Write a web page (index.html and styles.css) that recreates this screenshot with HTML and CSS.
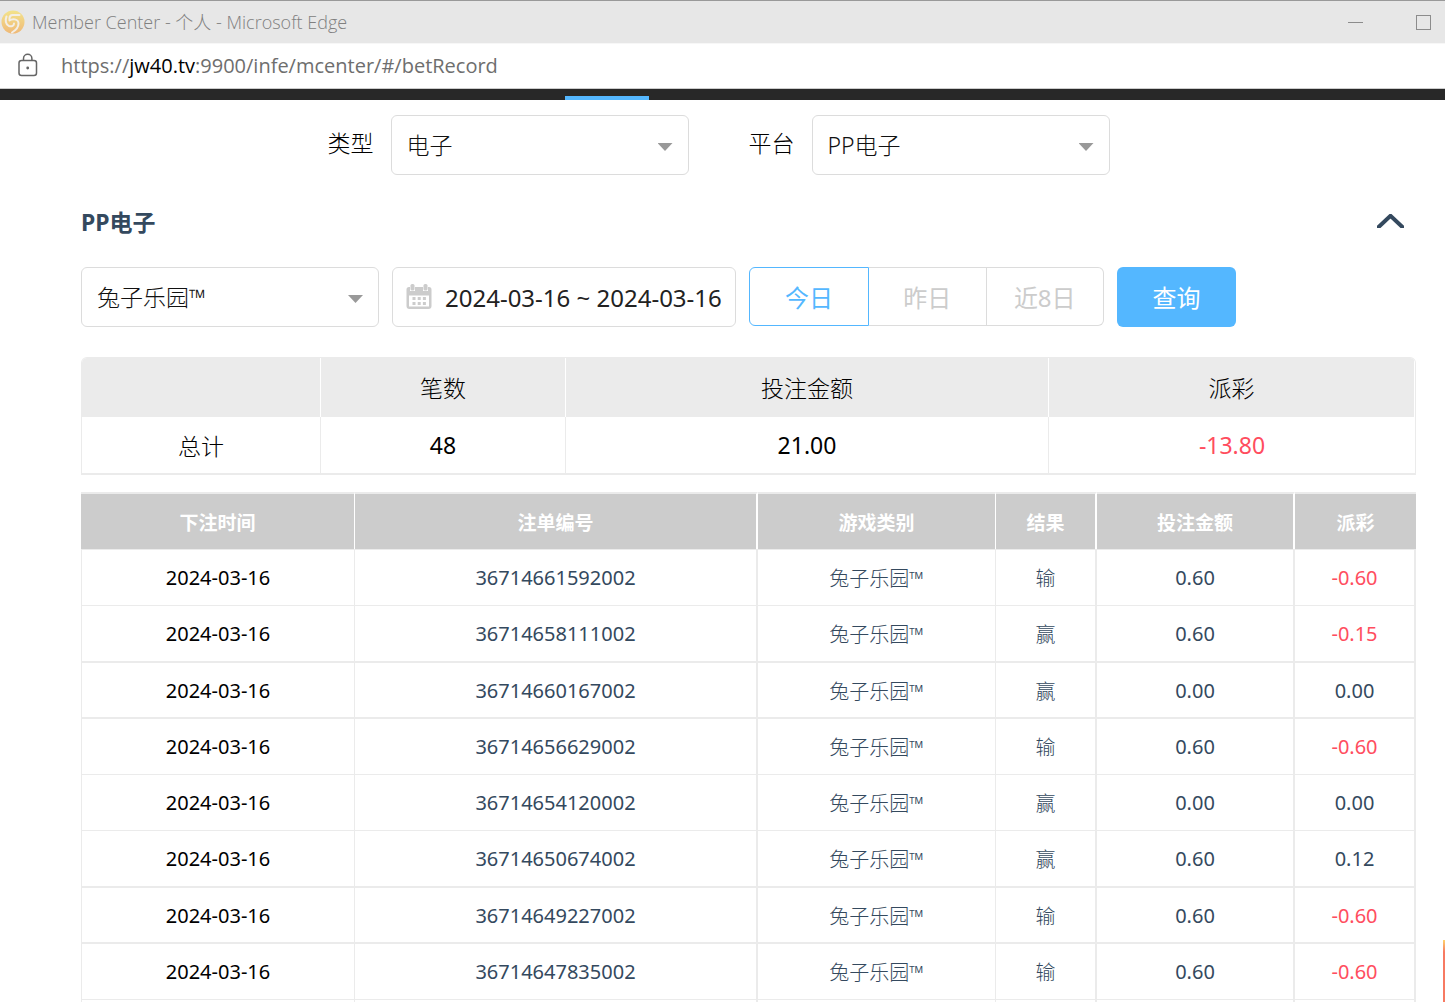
FILE: index.html
```
<!DOCTYPE html>
<html lang="zh-CN">
<head>
<meta charset="utf-8">
<title>Member Center</title>
<link rel="stylesheet" href="styles.css">
</head>
<body>
<div class="window">
  <header class="titlebar">
    <svg class="favicon" width="24" height="24" viewBox="0 0 24 24" aria-hidden="true">
      <defs><linearGradient id="gold" x1="0" y1="0" x2="0" y2="1"><stop offset="0" stop-color="#f3e38b"/><stop offset="1" stop-color="#efb978"/></linearGradient></defs>
      <circle cx="12" cy="12" r="11.5" fill="url(#gold)"/>
      <path d="M18.500 5H11.500C9.500 5 8.500 6.500 8.500 8.500V10.500C11 8.500 17.500 8.500 17.500 13.500C17.500 18 14.500 20.500 11 22.500M5.500 6.500C4 10 4.500 14.500 8 16C11 17 13 15.500 13 13.500" fill="none" stroke="#f3eee6" stroke-width="2" stroke-linecap="round" stroke-linejoin="round"/>
    </svg>
    <span class="window-title">Member Center - 个人 - Microsoft Edge</span>
    <div class="window-controls">
      <button class="control" type="button" aria-label="最小化"><svg width="15" height="15" viewBox="0 0 15 15"><path d="M0 7.500H15" stroke="#8c8c8c"/></svg></button>
      <button class="control" type="button" aria-label="最大化"><svg width="15" height="15" viewBox="0 0 15 15"><rect x=".5" y=".5" width="14" height="14" fill="none" stroke="#8c8c8c"/></svg></button>
    </div>
  </header>
  <div class="addressbar">
    <svg width="20" height="24" viewBox="0 0 20 24" fill="none" stroke="#666" stroke-width="1.500" aria-hidden="true">
      <rect x="1" y="7.500" width="17.500" height="15" rx="2.500"/><path d="M5.500 7.500V5.500a4.200 4.200 0 0 1 8.400 0V7.500"/><circle cx="9.700" cy="15" r="1.400" fill="#666" stroke="none"/>
    </svg>
    <span class="url">https://<span class="host">jw40.tv</span>:9900/infe/mcenter/#/betRecord</span>
  </div>
  <nav class="navstrip"><span class="nav-active"></span></nav>

  <main class="content">
    <form class="filters">
      <div class="field">
        <label for="type">类型</label>
        <span class="select"><select id="type"><option>电子</option></select></span>
      </div>
      <div class="field">
        <label for="platform">平台</label>
        <span class="select"><select id="platform"><option>PP电子</option></select></span>
      </div>
    </form>

    <div class="section-head">
      <h1>PP电子</h1>
      <button class="collapse" type="button" aria-label="收起"><svg width="27" height="14" viewBox="0 0 27 14"><path d="M-1 15.500L13.500 1.800L28 15.500" fill="none" stroke="#34495e" stroke-width="4"/></svg></button>
    </div>

    <form class="query">
      <span class="select"><select aria-label="游戏"><option>兔子乐园™</option></select></span>
      <label class="daterange">
        <svg width="26" height="26" viewBox="0 0 26 26" aria-hidden="true">
          <path d="M3 3H23a2.500 2.500 0 0 1 2.500 2.500V22a3 3 0 0 1-3 3h-19a3 3 0 0 1-3-3V5.500A2.500 2.500 0 0 1 3 3Z" fill="#ccc"/>
          <path d="M3 11.500H23V22.500H3Z" fill="#fff"/>
          <path d="M4 0H9V7H4ZM17 0H22V7H17Z" fill="#fff"/>
          <rect x="4.500" y="0" width="4" height="6.500" rx="1.500" fill="#ccc"/><rect x="17.500" y="0" width="4" height="6.500" rx="1.500" fill="#ccc"/>
          <path d="M6.500 14.500H20M6.500 19.500H20" stroke="#ccc" stroke-width="3" stroke-dasharray="3 2.200"/>
        </svg>
        <input type="text" value="2024-03-16 ~ 2024-03-16" aria-label="日期范围">
      </label>
      <div class="range-buttons">
        <button type="button" class="active">今日</button>
        <button type="button">昨日</button>
        <button type="button">近8日</button>
      </div>
      <button type="button" class="search">查询</button>
    </form>

    <table class="summary">
      <colgroup><col class="s-name"><col class="s-count"><col class="s-bet"><col class="s-pay"></colgroup>
      <thead><tr><th></th><th>笔数</th><th>投注金额</th><th>派彩</th></tr></thead>
      <tbody><tr><td>总计</td><td>48</td><td>21.00</td><td class="loss">-13.80</td></tr></tbody>
    </table>

    <table class="records">
      <colgroup><col class="r-time"><col class="r-id"><col class="r-game"><col class="r-result"><col class="r-bet"><col class="r-pay"></colgroup>
      <thead><tr><th>下注时间</th><th>注单编号</th><th>游戏类别</th><th>结果</th><th>投注金额</th><th>派彩</th></tr></thead>
      <tbody>
        <tr><td>2024-03-16</td><td>36714661592002</td><td>兔子乐园™</td><td>输</td><td>0.60</td><td class="loss">-0.60</td></tr>
        <tr><td>2024-03-16</td><td>36714658111002</td><td>兔子乐园™</td><td>赢</td><td>0.60</td><td class="loss">-0.15</td></tr>
        <tr><td>2024-03-16</td><td>36714660167002</td><td>兔子乐园™</td><td>赢</td><td>0.00</td><td>0.00</td></tr>
        <tr><td>2024-03-16</td><td>36714656629002</td><td>兔子乐园™</td><td>输</td><td>0.60</td><td class="loss">-0.60</td></tr>
        <tr><td>2024-03-16</td><td>36714654120002</td><td>兔子乐园™</td><td>赢</td><td>0.00</td><td>0.00</td></tr>
        <tr><td>2024-03-16</td><td>36714650674002</td><td>兔子乐园™</td><td>赢</td><td>0.60</td><td>0.12</td></tr>
        <tr><td>2024-03-16</td><td>36714649227002</td><td>兔子乐园™</td><td>输</td><td>0.60</td><td class="loss">-0.60</td></tr>
        <tr><td>2024-03-16</td><td>36714647835002</td><td>兔子乐园™</td><td>输</td><td>0.60</td><td class="loss">-0.60</td></tr>
        <tr><td></td><td></td><td></td><td></td><td></td><td></td></tr>
      </tbody>
    </table>
  </main>
  <div class="floating-tab"></div>
</div>
</body>
</html>
```
FILE: styles.css
```
* { box-sizing: border-box; }
body {
  margin: 0;
  background: #fff;
  color: #000;
  font-family: "Noto Sans", "Noto Sans CJK SC", sans-serif;
  font-size: 23px;
}
button, input, select { font: inherit; color: inherit; }
.window {
  position: relative;
  height: 100vh;
  overflow: hidden;
}

/* Browser chrome */
.titlebar {
  display: flex;
  align-items: center;
  gap: 7px;
  height: 44px;
  padding-left: 1px;
  padding-right: 14px;
  background: #e7e7e7;
  border-top: 1px solid #999;
  border-bottom: 1px solid #f7f7f7;
  color: #808080;
  font-family: "Open Sans", "Noto Sans CJK SC", sans-serif;
  font-size: 18px;
  font-weight: 300;
}
.window-title { padding-bottom: 3px; }
.window-controls {
  display: flex;
  gap: 53px;
  margin-left: auto;
}
.control {
  display: flex;
  padding: 0;
  border: 0;
  background: none;
}
.addressbar {
  display: flex;
  align-items: center;
  gap: 23px;
  height: 45px;
  padding-left: 18px;
  padding-bottom: 2px;
  border-bottom: 1px solid #ccc;
  color: #6e6e6e;
  font-family: "Open Sans", sans-serif;
  font-size: 20px;
}
.host { color: #000; }
.navstrip {
  display: flex;
  align-items: flex-end;
  height: 11px;
  padding-left: 565px;
  background: #282828;
}
.nav-active {
  width: 84px;
  height: 4px;
  background: #54b7ff;
}

/* Filters */
.content { padding: 15px 29px 0 81px; }
.filters {
  display: flex;
  justify-content: center;
  gap: 60px;
  padding-right: 60px;
}
.field {
  display: flex;
  align-items: center;
  gap: 17px;
  font-weight: 300;
}
.field label { padding-bottom: 6px; }
.select {
  position: relative;
  display: flex;
  width: 298px;
}
.select::after {
  content: "";
  position: absolute;
  right: 16px;
  top: 28px;
  width: 15px;
  height: 8px;
  background: #999;
  clip-path: polygon(0 0, 100% 0, 50% 100%);
  pointer-events: none;
}
select {
  width: 100%;
  height: 60px;
  padding: 0 15px;
  border: 1px solid #dcdcdc;
  border-radius: 6px;
  background: #fff;
  color: #111;
  font-weight: 300;
  appearance: none;
}
.section-head {
  display: flex;
  align-items: center;
  justify-content: space-between;
  height: 92px;
  padding-right: 12px;
}
h1 {
  margin: 0;
  color: #34495e;
  font-size: 23px;
  font-weight: 700;
}
.collapse {
  display: flex;
  padding: 0;
  border: 0;
  background: none;
}
.query {
  display: flex;
  gap: 13px;
}
.daterange {
  display: flex;
  align-items: center;
  gap: 13px;
  width: 344px;
  height: 60px;
  padding-left: 13px;
  border: 1px solid #dcdcdc;
  border-radius: 6px;
  color: #222;
  font-size: 24px;
}
.daterange svg { flex: none; }
.daterange input {
  flex: 1;
  min-width: 0;
  padding: 0;
  border: 0;
  outline: 0;
  background: none;
}
.range-buttons {
  display: flex;
  width: 355px;
  height: 59px;
}
.range-buttons button {
  flex: 1;
  padding: 0;
  border: 1px solid #dcdcdc;
  border-left: 0;
  background: #fff;
  color: #ccc;
  font-size: 24px;
}
.range-buttons .active {
  flex: none;
  width: 120px;
  border: 1px solid #54b7ff;
  border-radius: 6px 0 0 6px;
  color: #54b7ff;
}
.range-buttons button:last-child { border-radius: 0 6px 6px 0; }
.search {
  width: 119px;
  height: 60px;
  padding: 0 0 2px;
  border: 0;
  border-radius: 6px;
  background: #54b7ff;
  color: #fff;
  font-size: 24px;
}

/* Tables */
table {
  width: 100%;
  table-layout: fixed;
  border-spacing: 0;
  text-align: center;
}
th, td { padding: 0; }
.summary {
  margin-top: 30px;
  border: 1px solid #ebebeb;
  border-bottom-width: 2px;
  border-radius: 6px 6px 0 0;
  overflow: hidden;
}
.s-name { width: 239px; }
.s-count { width: 245px; }
.s-bet { width: 483px; }
.summary th {
  height: 59px;
  padding-bottom: 2px;
  background: #ebebeb;
  border-right: 1px solid #fff;
  font-weight: 300;
}
.summary td {
  height: 56px;
  border-right: 1px solid #ebebeb;
}
.summary td:first-child { font-weight: 300; }
.summary td:last-child { border-right: 0; }
.records {
  margin-top: 17px;
  font-size: 20px;
}
.r-time { width: 274px; }
.r-id { width: 403px; }
.r-game { width: 238px; }
.r-result { width: 101px; }
.r-bet { width: 198px; }
.records th {
  height: 57px;
  background: #ccc;
  border-top: 2px solid #ebebeb;
  border-right: 2px solid #fff;
  color: #fff;
  font-size: 19px;
  font-weight: 700;
}
.records th:last-child { border-right: 0; }
.records td {
  height: 56px;
  border-top: 1px solid #ebebeb;
  border-right: 2px solid #ebebeb;
  color: #34495e;
}
.records td:first-child {
  border-left: 1px solid #ebebeb;
  color: #000;
}
.records tr > :nth-child(1), .records tr > :nth-child(3) { border-right-width: 1px; }
.records td:nth-child(3), .records td:nth-child(4) { font-weight: 300; }
.records tr:nth-child(4n+3) td { border-top-width: 2px; }
.records tr:nth-child(4n+4) td {
  height: 57px;
  border-top-width: 2px;
}
.summary .loss, .records .loss { color: #ff4d5e; }

.floating-tab {
  position: absolute;
  right: 0;
  bottom: 0;
  width: 2px;
  height: 62px;
  background: linear-gradient(#ffd36b, #f77a62 12px);
}
```
